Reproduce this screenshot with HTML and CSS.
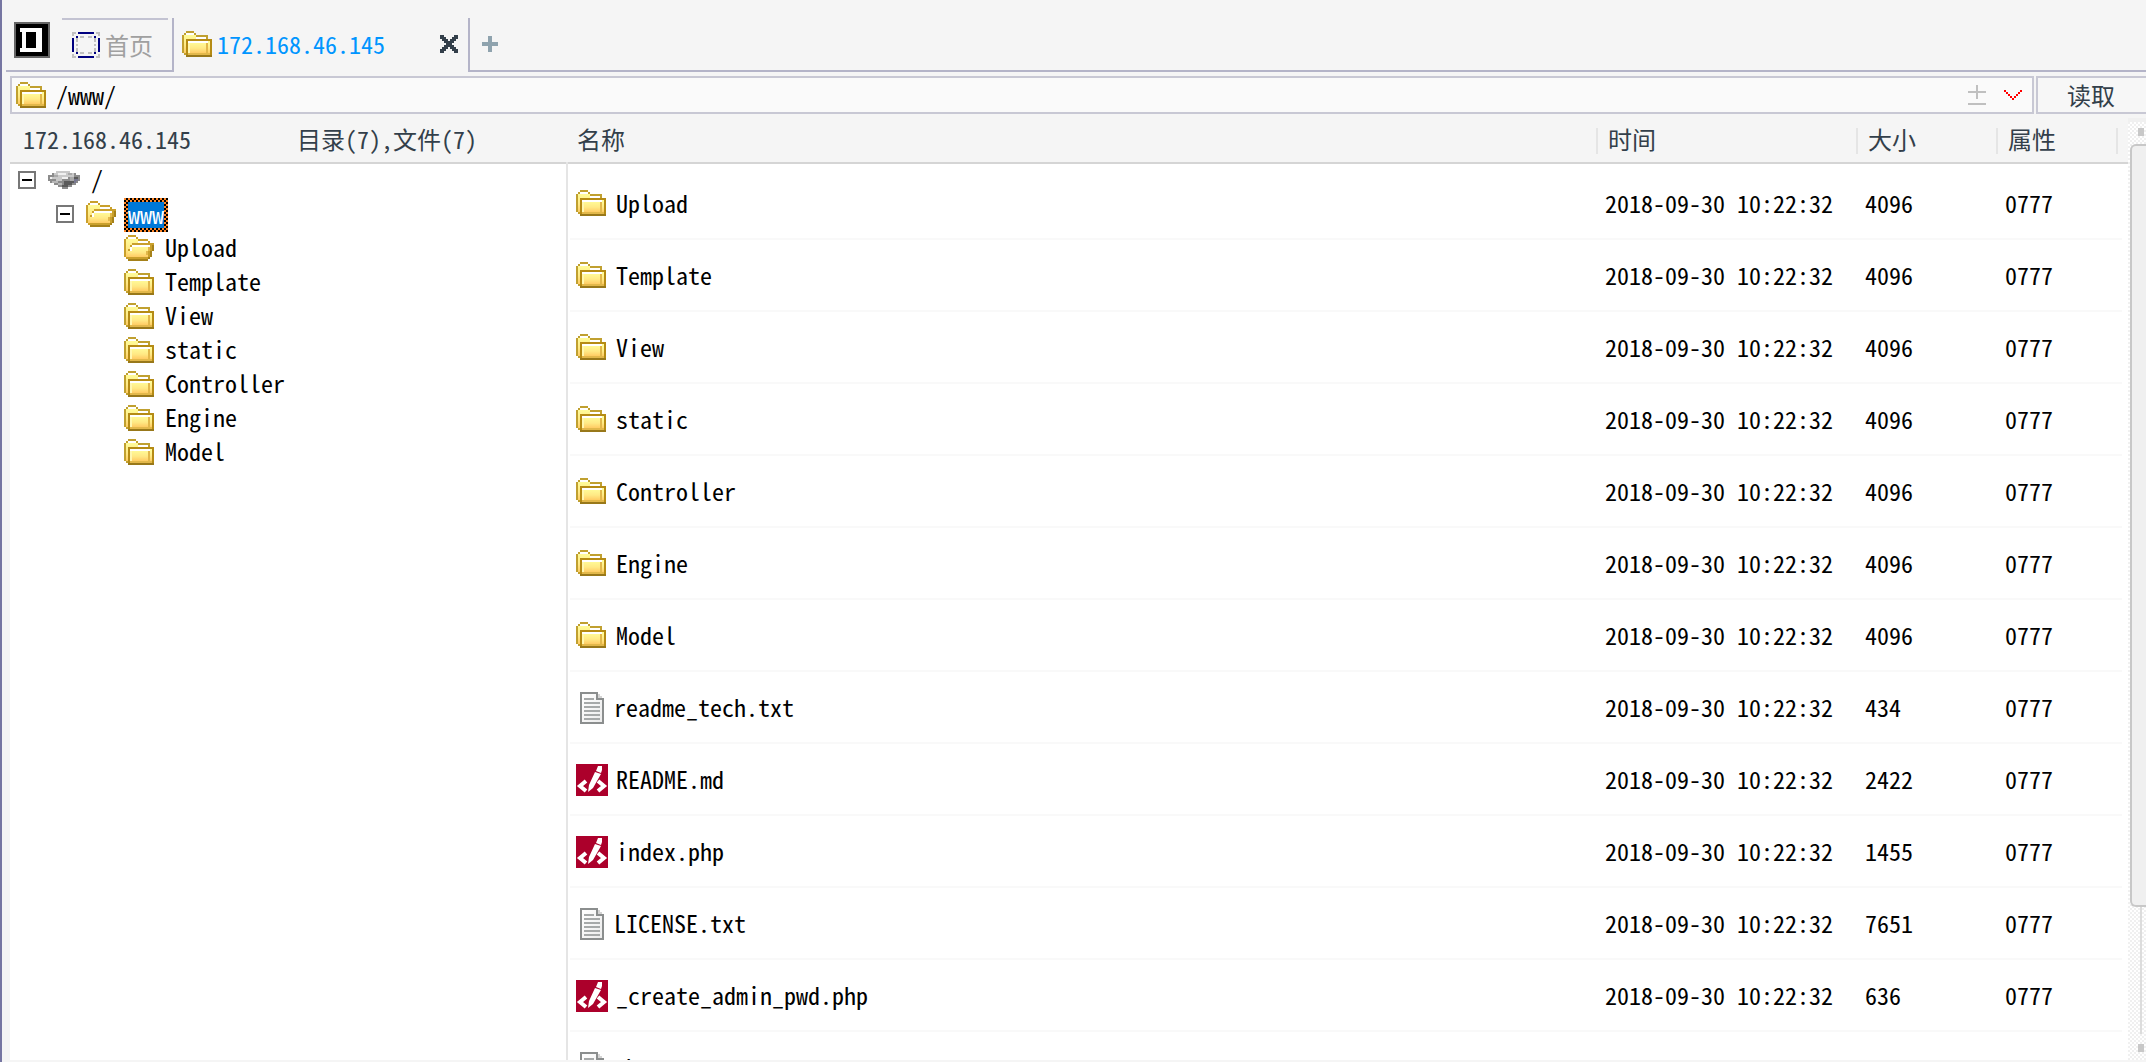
FILE: index.html
```
<!DOCTYPE html>
<html lang="zh-CN">
<head>
<meta charset="utf-8">
<title>172.168.46.145</title>
<link rel="stylesheet" href="styles.css">
</head>
<body>
<svg class="defs" aria-hidden="true">
  <defs>
    <linearGradient id="gold" x1="0" y1="0" x2="0" y2="1">
      <stop offset="0" stop-color="#ffff9c"/><stop offset="0.6" stop-color="#ffe985"/><stop offset="1" stop-color="#ffcb63"/>
    </linearGradient>
    <linearGradient id="paper" x1="0" y1="0" x2="1" y2="1">
      <stop offset="0" stop-color="#ffffff"/><stop offset="1" stop-color="#ececec"/>
    </linearGradient>
    <symbol id="folder" viewBox="0 0 15 13">
      <path fill="#c0a030" d="M2 0h4v1h1v1h6v3h2v8H2v-1H1v-1H0V2h1V1h1z"/>
      <path fill="url(#gold)" d="M2 1h4v1h1v1h5v1H2v7H1V2h1z"/>
      <path fill="#fff" d="M2 1h4v1H2zM7 3h5v1H7z"/>
      <path fill="#b58b14" d="M2 4h13v9H2z"/>
      <path fill="url(#gold)" d="M3 5h11v6H3z"/>
      <path fill="#fff" d="M3 5h10v1H3z"/>
      <path fill="#fff7b0" d="M3 6h1v5H3z"/>
      <path fill="#e2b84b" d="M12 6h1v5h-1zM3 11h11v1H3z"/>
      <path fill="#98781a" d="M2 12h13v1H2z"/>
    </symbol>
    <symbol id="folder-open" viewBox="0 0 15 13">
      <path fill="#c9a02c" d="M2 0h4v1h1v1h5v1h1v1h2v4h-1v3h-1v1h-1v1H2v-1H1v-1H0V2h1V1h1z"/>
      <path fill="url(#gold)" d="M2 1h4v1h1v1h5v1H4v1H3v2H2v4H1V2h1z"/>
      <path fill="#fff" d="M2 1h4v1H2zM7 3h5v1H7z"/>
      <path fill="url(#gold)" d="M4 5h9v3h-1v3H2V8h1V6h1z"/>
      <path fill="#fff" d="M4 5h9v1H4zM3 6h1v2H3z"/>
      <path fill="#e2b84b" d="M12 6h1v2h-1v2h-1V8h1z"/>
      <path fill="#a5811a" d="M2 12h10v1H2zM12 11h1v1h-1zM14 5h1v3h-1zM13 8h1v3h-1z"/>
    </symbol>
    <symbol id="drive" viewBox="0 0 16 9">
      <path fill="#8c8c8c" d="M4 0h7v1h3v1h2v3h-1v1h-1v1h-2v1h-2v1H7V8H5V7H3V6H1V5H0V2h2V1h2z"/>
      <path fill="#c9c9c9" d="M4 0h7v1h2v2h-3v1H7v1H4V4H2V3h1V1h1z"/>
      <path fill="#f0f0f0" d="M5 1h4v1H5zM7 3h3v1H7zM1 3h1v1H1z"/>
      <path fill="#a9a9a9" d="M10 1h2v1h-2zM3 2h2v1H3zM11 3h2v2h-2z"/>
      <path fill="#5a5a5a" d="M8 5h5v1h-1v1h-2v1H7V7h1zM13 3h2v1h-2z"/>
      <path fill="#77778f" d="M13 4h2v1h-1v1h-1z"/>
      <path fill="#b8b8b8" d="M2 5h3v1h2v1H5V6H2z"/>
    </symbol>
    <symbol id="doc" viewBox="0 0 12 16">
      <path fill="#8b8e8e" d="M0 0h9v1h1v1h1v1h1v13H0z"/>
      <path fill="url(#paper)" d="M1 1h7v3h3v11H1z"/>
      <path fill="#d4d4d4" d="M9 1h1v1h1v1H9z"/>
      <path fill="#a6a9a9" d="M2 3h5v1H2zM2 5h8v1H2zM2 7h8v1H2zM2 9h8v1H2zM2 11h8v1H2zM2 13h8v1H2z"/>
    </symbol>
    <symbol id="code" viewBox="0 0 32 32">
      <path fill="#ac002b" d="M0 0h32v32H0z"/>
      <path fill="none" stroke="#fff" stroke-width="4" d="M10 17l-6 5 6 5M22 17l6 5-6 5"/>
      <path fill="#fff" d="M19 8l6 2-8 14-5 4 1-7zM22 2h4v4l-1 3-5-2z"/>
    </symbol>
    <symbol id="home" viewBox="0 0 14 13">
      <path fill="#c0c0c0" d="M0 0h2v1H1v1H0zM12 0h2v2h-1V1h-1zM0 11h1v1h1v1H0zM13 11h1v2h-2v-1h1zM4 2h2v1H4zM8 2h2v1H8zM4 10h2v1H4zM8 10h2v1H8zM2 3h1v2H2zM2 6h1v1H2zM2 8h1v2H2zM11 3h1v2h-1zM11 6h1v1h-1zM11 8h1v2h-1z"/>
      <path fill="#000080" d="M3 0h8v1H3zM3 12h8v1H3zM0 3h1v7H0zM13 3h1v7h-1zM2 2h1v1H2zM11 2h1v1h-1zM2 10h1v1H2zM11 10h1v1h-1z"/>
    </symbol>
  </defs>
</svg>

<nav class="tabbar" aria-label="标签页">
  <div class="brand">
    <svg class="logo" viewBox="0 0 18 18">
      <path fill="#666" d="M0 0h18v18H0z"/><path fill="#000" d="M1 1h16v16H1z"/>
      <path fill="#fff" d="M3 3h11v12H3v-2h1V5H3z"/><path fill="#000" d="M6 5h5v8H6z"/>
    </svg>
  </div>
  <div class="tab tab-home"><button type="button"><svg class="ico-home"><use href="#home"/></svg>首页</button></div>
  <div class="tab tab-active">
    <button class="tab-name" type="button"><svg class="ico-folder"><use href="#folder"/></svg>172.168.46.145</button>
    <button class="close" type="button" aria-label="关闭"><svg class="ico-close" viewBox="0 0 9 9"><path d="M0 0h2v1h1v1h1v1h1V2h1V1h1V0h2v2H8v1H7v1H6v1h1v1h1v1h1v2H7V8H6V7H5V6H4v1H3v1H2v1H0V7h1V6h1V5h1V4H2V3H1V2H0z"/></svg></button>
  </div>
  <div class="tab-rest"><button type="button" aria-label="新标签"><svg class="ico-plus" viewBox="0 0 8 8"><path d="M3 0h2v3h3v2H5v3H3V5H0V3h3z"/></svg></button></div>
</nav>

<form class="address">
  <div class="field">
    <svg class="ico-folder"><use href="#folder"/></svg>
    <input type="text" value="/www/" aria-label="路径">
    <button type="button" aria-label="添加"><svg class="ico-pm" viewBox="0 0 18 20"><path d="M8 0h2v6h8v2h-8v6H8V8H0V6h8zM0 18h18v2H0z"/></svg></button>
    <button type="button" aria-label="历史"><svg class="ico-chev" viewBox="0 0 9 5"><path d="M0 0h1v1h1v1h1v1h1v1h1V3h1V2h1V1h1V0h1v1H8v1H7v1H6v1H5v1H4V4H3V3H2V2H1V1H0z"/></svg></button>
  </div>
  <button class="read" type="button">读取</button>
</form>

<main>
  <section class="side">
    <header><span class="host">172.168.46.145</span><span>目录(7),文件(7)</span></header>
    <ul class="tree">
      <li>
        <div class="node"><button class="toggle" type="button" aria-label="折叠"></button><svg class="ico-drive"><use href="#drive"/></svg><span>/</span></div>
        <ul>
          <li>
            <div class="node"><button class="toggle" type="button" aria-label="折叠"></button><svg class="ico-folder"><use href="#folder-open"/></svg><span class="selected"><b>www</b></span></div>
            <ul class="leaves">
              <li class="node"><svg class="ico-folder"><use href="#folder-open"/></svg><span>Upload</span></li>
              <li class="node"><svg class="ico-folder"><use href="#folder"/></svg><span>Template</span></li>
              <li class="node"><svg class="ico-folder"><use href="#folder"/></svg><span>View</span></li>
              <li class="node"><svg class="ico-folder"><use href="#folder"/></svg><span>static</span></li>
              <li class="node"><svg class="ico-folder"><use href="#folder"/></svg><span>Controller</span></li>
              <li class="node"><svg class="ico-folder"><use href="#folder"/></svg><span>Engine</span></li>
              <li class="node"><svg class="ico-folder"><use href="#folder"/></svg><span>Model</span></li>
            </ul>
          </li>
        </ul>
      </li>
    </ul>
  </section>

  <section class="list">
    <table>
      <thead>
        <tr><th>名称</th><th class="time">时间</th><th class="size">大小</th><th class="attr">属性</th><th class="end"></th></tr>
      </thead>
      <tbody>
        <tr><td><div class="file"><svg class="ico-folder"><use href="#folder"/></svg>Upload</div></td><td>2018-09-30 10:22:32</td><td>4096</td><td>0777</td><td></td></tr>
        <tr><td><div class="file"><svg class="ico-folder"><use href="#folder"/></svg>Template</div></td><td>2018-09-30 10:22:32</td><td>4096</td><td>0777</td><td></td></tr>
        <tr><td><div class="file"><svg class="ico-folder"><use href="#folder"/></svg>View</div></td><td>2018-09-30 10:22:32</td><td>4096</td><td>0777</td><td></td></tr>
        <tr><td><div class="file"><svg class="ico-folder"><use href="#folder"/></svg>static</div></td><td>2018-09-30 10:22:32</td><td>4096</td><td>0777</td><td></td></tr>
        <tr><td><div class="file"><svg class="ico-folder"><use href="#folder"/></svg>Controller</div></td><td>2018-09-30 10:22:32</td><td>4096</td><td>0777</td><td></td></tr>
        <tr><td><div class="file"><svg class="ico-folder"><use href="#folder"/></svg>Engine</div></td><td>2018-09-30 10:22:32</td><td>4096</td><td>0777</td><td></td></tr>
        <tr><td><div class="file"><svg class="ico-folder"><use href="#folder"/></svg>Model</div></td><td>2018-09-30 10:22:32</td><td>4096</td><td>0777</td><td></td></tr>
        <tr><td><div class="file"><svg class="ico-doc"><use href="#doc"/></svg>readme_tech.txt</div></td><td>2018-09-30 10:22:32</td><td>434</td><td>0777</td><td></td></tr>
        <tr><td><div class="file"><svg class="ico-code"><use href="#code"/></svg>README.md</div></td><td>2018-09-30 10:22:32</td><td>2422</td><td>0777</td><td></td></tr>
        <tr><td><div class="file"><svg class="ico-code"><use href="#code"/></svg>index.php</div></td><td>2018-09-30 10:22:32</td><td>1455</td><td>0777</td><td></td></tr>
        <tr><td><div class="file"><svg class="ico-doc"><use href="#doc"/></svg>LICENSE.txt</div></td><td>2018-09-30 10:22:32</td><td>7651</td><td>0777</td><td></td></tr>
        <tr><td><div class="file"><svg class="ico-code"><use href="#code"/></svg>_create_admin_pwd.php</div></td><td>2018-09-30 10:22:32</td><td>636</td><td>0777</td><td></td></tr>
        <tr><td><div class="file"><svg class="ico-doc"><use href="#doc"/></svg>.htaccess</div></td><td></td><td></td><td></td><td></td></tr>
      </tbody>
    </table>
  </section>

  <div class="scroll" aria-hidden="true">
    <i class="arrow"></i><i class="thumb"></i><i class="track"></i><i class="arrow"></i>
  </div>
</main>
</body>
</html>
```
FILE: styles.css
```
* { box-sizing: border-box; }

body {
  margin: 0;
  height: 100vh;
  display: flex;
  flex-direction: column;
  overflow: hidden;
  border-left: 2px solid #7676a2;
  background: #f5f5f5;
  color: #000;
  font: 24px/24px "Noto Sans Mono CJK SC", "Noto Sans CJK SC", "Liberation Mono", monospace;
}

button, input {
  margin: 0;
  padding: 0;
  border: 0;
  background: none;
  color: inherit;
  font: inherit;
}

ul { margin: 0; padding: 0; list-style: none; }
svg { display: block; flex: none; shape-rendering: crispEdges; }

.defs { position: absolute; width: 0; height: 0; }
.ico-folder { width: 30px; height: 26px; }
.ico-drive { width: 32px; height: 18px; }
.ico-doc { width: 24px; height: 32px; margin: 2px 2px 0 4px; }
.ico-code { width: 32px; height: 32px; margin-top: 2px; shape-rendering: auto; }
.ico-home { width: 28px; height: 26px; }
.ico-close { width: 18px; height: 18px; fill: #333f4a; }
.ico-plus { width: 16px; height: 16px; fill: #8fa3ae; }
.ico-pm { width: 18px; height: 20px; fill: #c0c0c0; }
.ico-chev { width: 18px; height: 10px; fill: #f00; }

/* tabs */
.tabbar { display: flex; flex: none; height: 72px; padding-left: 4px; }
.brand { width: 52px; padding: 22px 8px 0; border-bottom: 2px solid #b4b4c8; }
.logo { width: 36px; height: 36px; }
.tab, .tab-rest { display: flex; margin-top: 18px; }
.tab button { display: flex; align-items: center; white-space: nowrap; }
.tab-home { padding: 0 4px; border: solid #b4b4c8; border-width: 0 2px 2px 0; color: #a0a0a0; }
.tab-home button { gap: 5px; padding: 0 15px 0 10px; border-top: 2px solid #c3c3d2; }
.tab-active { width: 294px; justify-content: space-between; padding: 0 10px 2px 8px; color: #0095ff; }
.tab-name { gap: 5px; }
.tab-rest { flex: 1; border-left: 2px solid #b4b4c8; border-bottom: 2px solid #b4b4c8; }
.tab-rest button { padding: 0 12px; }

/* address bar */
.address { display: flex; flex: none; gap: 2px; margin: 4px 0 0 8px; height: 38px; }
.field { display: flex; flex: 1; align-items: center; gap: 10px; padding: 0 10px 0 4px; border: 2px solid #c8c8d4; background: #fafafa; }
.field input { flex: 1; min-width: 0; padding-bottom: 2px; outline: 0; }
.field button + button { margin-left: 8px; }
.read { width: 110px; padding-right: 2px; border: solid #c8c8d4; border-width: 2px 0 2px 2px; background: #f7f7f7; color: #333f4a; }

/* main area */
main { display: grid; flex: 1; grid-template-columns: 558px minmax(0, 1fr) 18px; min-height: 0; margin: 0 0 2px 8px; }
.side, .list { background: linear-gradient(#f5f5f5 48px, #d5d5d5 48px, #d5d5d5 50px, #fff 50px); overflow: hidden; }
.side { background: linear-gradient(#e5e5e5, #e5e5e5) right 48px / 2px 100% no-repeat, linear-gradient(#f5f5f5 48px, #d5d5d5 48px, #d5d5d5 50px, #fff 50px); }
.side header { display: flex; gap: 106px; height: 50px; padding: 13px 0 0 13px; color: #333f4a; white-space: nowrap; }

.tree { padding-left: 8px; }
.tree ul { padding-left: 38px; }
.tree .leaves { padding-left: 68px; }
.node { display: flex; align-items: center; gap: 8px; height: 34px; padding-bottom: 2px; }
.node span { padding: 0 0 2px 3px; }
.toggle { width: 18px; height: 18px; margin-right: 4px; border: 2px solid #777; background: linear-gradient(#000, #000) center / 10px 2px no-repeat #fff; }
.node .selected { height: 34px; margin-bottom: -2px; padding: 4px; background: repeating-conic-gradient(#000 0 25%, #ff8728 0 50%) 0 0 / 4px 4px; }
.selected b { display: block; height: 26px; background: #0078d7; color: #fff; font-weight: 400; }

/* file list */
.list { padding: 0 6px 0 2px; }
table { width: 100%; border-collapse: separate; border-spacing: 0; table-layout: fixed; }
th { height: 54px; padding: 13px 10px 16px; vertical-align: top; text-align: left; font-weight: 400; color: #333f4a; background: linear-gradient(#e5e5e5, #e5e5e5) right 14px / 2px 26px no-repeat; }
th:first-child { padding-left: 7px; }
th.end { padding: 0; background: none; }
.time { width: 260px; }
.size { width: 140px; }
.attr { width: 120px; }
.end { width: 4px; }
td { height: 72px; padding: 0 6px; border-bottom: 2px solid #f9f9f9; white-space: nowrap; }
td + td { padding-left: 7px; }
td:last-child { padding: 0; }
.file { display: flex; align-items: center; gap: 8px; height: 34px; }
.file .ico-folder { margin-right: 2px; }

/* scrollbar */
.scroll { display: flex; flex-direction: column; margin-top: 4px; padding: 10px 0 8px 2px; background: linear-gradient(#f0f0f0, #f0f0f0) 0 0 / 100% 4px no-repeat, repeating-conic-gradient(#fff 0 25%, #f0f0f0 0 50%) 0 0 / 4px 4px; overflow: hidden; }
.arrow { width: 6px; height: 8px; margin-left: 8px; background: #c8c8c8; }
.thumb { flex: 762; margin-top: 8px; border: solid #c8c8c8; border-width: 2px 0 2px 2px; border-radius: 6px 0 0 6px; background: #f0f0f0; }
.track { flex: 128; width: 2px; margin: 0 0 10px 10px; background: #dcdcdc; }
```
